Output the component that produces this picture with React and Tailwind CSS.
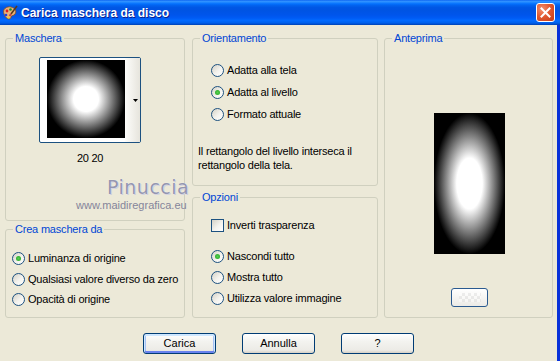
import React from 'react';

const font = { fontFamily: '"Liberation Sans", Arial, sans-serif' };

function Radio({ checked }) {
  return (
    <span className="w-[13px] h-[13px] rounded-full border border-[#1c5180] bg-[linear-gradient(135deg,#d4d1c6_0%,#f4f3ee_55%,#fff_100%)] flex items-center justify-center shrink-0">
      {checked && <span className="w-[5px] h-[5px] rounded-full bg-[radial-gradient(circle,#55d04f_0%,#21a121_100%)]" />}
    </span>
  );
}

function Option({ checked, label, h = 'h-[22px]' }) {
  return (
    <div className={`flex items-center gap-[3px] ${h}`}>
      <Radio checked={checked} />
      <span className="text-[11px] tracking-[-0.2px] text-black leading-[13px]">{label}</span>
    </div>
  );
}

function GroupBox({ title, className = '', children }) {
  return (
    <fieldset className={`border border-[#d0d0bf] rounded-[3px] ${className}`}>
      <legend className="ml-[7px] px-[2px] text-[11px] tracking-[-0.2px] leading-[13px] text-[#0046d5]">{title}</legend>
      {children}
    </fieldset>
  );
}

function XpButton({ label, primary }) {
  return (
    <button
      className={`w-[73px] h-[21px] rounded-[3px] border border-[#003c74] bg-[linear-gradient(to_bottom,#ffffff_0%,#f3f3ef_40%,#ecebe6_85%,#d6d0c5_100%)] text-[11px] text-black flex items-center justify-center ${
        primary ? 'shadow-[inset_0_1px_0_1px_#cee7ff,inset_0_-1px_0_1px_#6982ee,inset_1px_0_0_1px_#a7c2f3,inset_-1px_0_0_1px_#a7c2f3]' : ''
      }`}
    >
      {label}
    </button>
  );
}

function PaletteIcon() {
  return (
    <svg width="16" height="17" viewBox="0 0 16 17">
      <path d="M2 9 C0 4 5 1 9 2 C13 3 15 6 13 9 C12 11 9 10 9 12 C9 15 4 15 2 9 Z" fill="#e8b27a" stroke="#8a4b1c" strokeWidth="0.8" />
      <circle cx="5" cy="6" r="1.4" fill="#e02020" />
      <circle cx="8.5" cy="4.5" r="1.3" fill="#1f8f2a" />
      <circle cx="4" cy="10" r="1.3" fill="#2040e0" />
      <circle cx="6.5" cy="12.5" r="1.1" fill="#f0d020" />
      <path d="M15 1 L9 9" stroke="#5a3a1a" strokeWidth="1.6" />
      <path d="M9 9 L7.5 11" stroke="#d04040" strokeWidth="2" />
    </svg>
  );
}

export default function App() {
  return (
    <div className="relative w-[560px] h-[361px] bg-[#ece9d8] overflow-hidden text-black" style={font}>
      {/* Title bar */}
      <div className="h-[25px] flex items-center bg-[linear-gradient(to_bottom,#0058ee_0%,#3593ff_4%,#288eff_8%,#127dff_12%,#036ffc_16%,#0262ee_22%,#0057e5_30%,#0054e3_40%,#0055eb_60%,#005bf5_72%,#026afe_82%,#0062ef_90%,#0052d6_96%,#0040ab_100%)]">
        <span className="ml-[2px] mt-[1px]"><PaletteIcon /></span>
        <span className="ml-[3px] text-[12px] font-bold text-white [text-shadow:1px_1px_0_#0a1f8f]">Carica maschera da disco</span>
        <span className="ml-auto mr-[5px] w-[19px] h-[19px] rounded-[3px] border border-white bg-[radial-gradient(circle_at_30%_30%,#f29070_0%,#e25a32_45%,#c43a16_100%)] flex items-center justify-center">
          <svg width="11" height="11" viewBox="0 0 11 11">
            <path d="M1.5 1.5 L9.5 9.5 M9.5 1.5 L1.5 9.5" stroke="#fff" strokeWidth="2" strokeLinecap="square" />
          </svg>
        </span>
      </div>

      <div className="flex h-[336px]">
        <div className="flex-1 flex flex-col pt-[7px]">
          <div className="flex pl-[5px]">
            {/* Left column */}
            <div className="w-[180px] flex flex-col gap-[2px]">
              <GroupBox title="Maschera" className="h-[189px]">
                <div className="pl-[33px] mt-[12px] inline-flex flex-col items-center">
                  <div className="w-[102px] h-[86px] border border-[#1c5180] rounded-[2px] bg-white flex">
                    <div className="pl-[7px] pt-[2px]">
                      <div className="w-[78px] h-[78px] bg-[radial-gradient(circle_closest-side,#fff_0%,#fff_32%,#000_100%)]" />
                    </div>
                    <div className="flex-1 bg-[linear-gradient(to_right,#fdfdfb,#e6e4dc)] flex items-center justify-end pr-[2px]">
                      <svg width="5" height="3" viewBox="0 0 5 3"><path d="M0 0 H5 L2.5 3 Z" fill="#000" /></svg>
                    </div>
                  </div>
                  <div className="mt-[9px] text-[11px] leading-[13px] tracking-[-0.3px]">20 20</div>
                </div>
              </GroupBox>
              <GroupBox title="Crea maschera da" className="h-[95px]">
                <div className="pl-[6px] mt-[12px]">
                  <Option checked label="Luminanza di origine" h="h-[21px]" />
                  <Option label="Qualsiasi valore diverso da zero" h="h-[20px]" />
                  <Option label="Opacità di origine" h="h-[20px]" />
                </div>
              </GroupBox>
            </div>

            {/* Middle column */}
            <div className="w-[186px] ml-[7px] flex flex-col gap-[5px]">
              <GroupBox title="Orientamento" className="h-[154px]">
                <div className="pl-[18px] mt-[14px]">
                  <Option label="Adatta alla tela" />
                  <Option checked label="Adatta al livello" />
                  <Option label="Formato attuale" />
                </div>
                <p className="pl-[5px] mt-[19px] text-[11px] tracking-[-0.2px] leading-[14px]">
                  Il rettangolo del livello interseca il
                  <br />
                  rettangolo della tela.
                </p>
              </GroupBox>
              <GroupBox title="Opzioni" className="h-[127px]">
                <div className="pl-[18px] mt-[10px]">
                  <div className="flex items-center gap-[3px] h-[22px]">
                    <span className="w-[13px] h-[13px] border border-[#1c5180] bg-[linear-gradient(135deg,#d4d1c6_0%,#f4f3ee_55%,#fff_100%)] shrink-0" />
                    <span className="text-[11px] tracking-[-0.2px] leading-[13px]">Inverti trasparenza</span>
                  </div>
                  <div className="mt-[10px]">
                    <Option checked label="Nascondi tutto" h="h-[21px]" />
                    <Option label="Mostra tutto" h="h-[21px]" />
                    <Option label="Utilizza valore immagine" h="h-[21px]" />
                  </div>
                </div>
              </GroupBox>
            </div>

            {/* Right column */}
            <GroupBox title="Anteprima" className="w-[169px] ml-[6px] h-[286px]">
              <div className="flex flex-col items-center pl-[2px]">
                <div className="mt-[68px] w-[71px] h-[141px] bg-[radial-gradient(ellipse_closest-side,#fff_0%,#fff_36%,#000_100%)]" />
                <div className="mt-[34px] w-[37px] h-[19px] rounded-[3px] border border-[#2a5a90] bg-[linear-gradient(to_bottom,#ffffff,#ecebe6)] flex items-center justify-center">
                  <span className="w-[22px] h-[9px] opacity-40 bg-[repeating-conic-gradient(#d8d8d8_0%_25%,#ffffff_0%_50%)] bg-[length:6px_6px]" />
                </div>
              </div>
            </GroupBox>
          </div>

          {/* Buttons */}
          <div className="mt-[15px] flex justify-center gap-[26px]">
            <XpButton label="Carica" primary />
            <XpButton label="Annulla" />
            <XpButton label="?" />
          </div>
        </div>
        <div className="w-[3px] bg-[#0831d9]" />
      </div>

      {/* Watermark */}
      <div className="absolute left-[107px] top-[176px] text-[19px] leading-[22px] text-[#9496b0] tracking-[0.5px] [text-shadow:0_0_1px_#fff,1px_1px_0_#d0d0de]" style={{ fontFamily: '"DejaVu Sans", sans-serif' }}>
        Pinuccia
      </div>
      <div className="absolute left-[76px] top-[199px] text-[11px] leading-[13px] text-[#85859a]">
        www.maidiregrafica.eu
      </div>
    </div>
  );
}
